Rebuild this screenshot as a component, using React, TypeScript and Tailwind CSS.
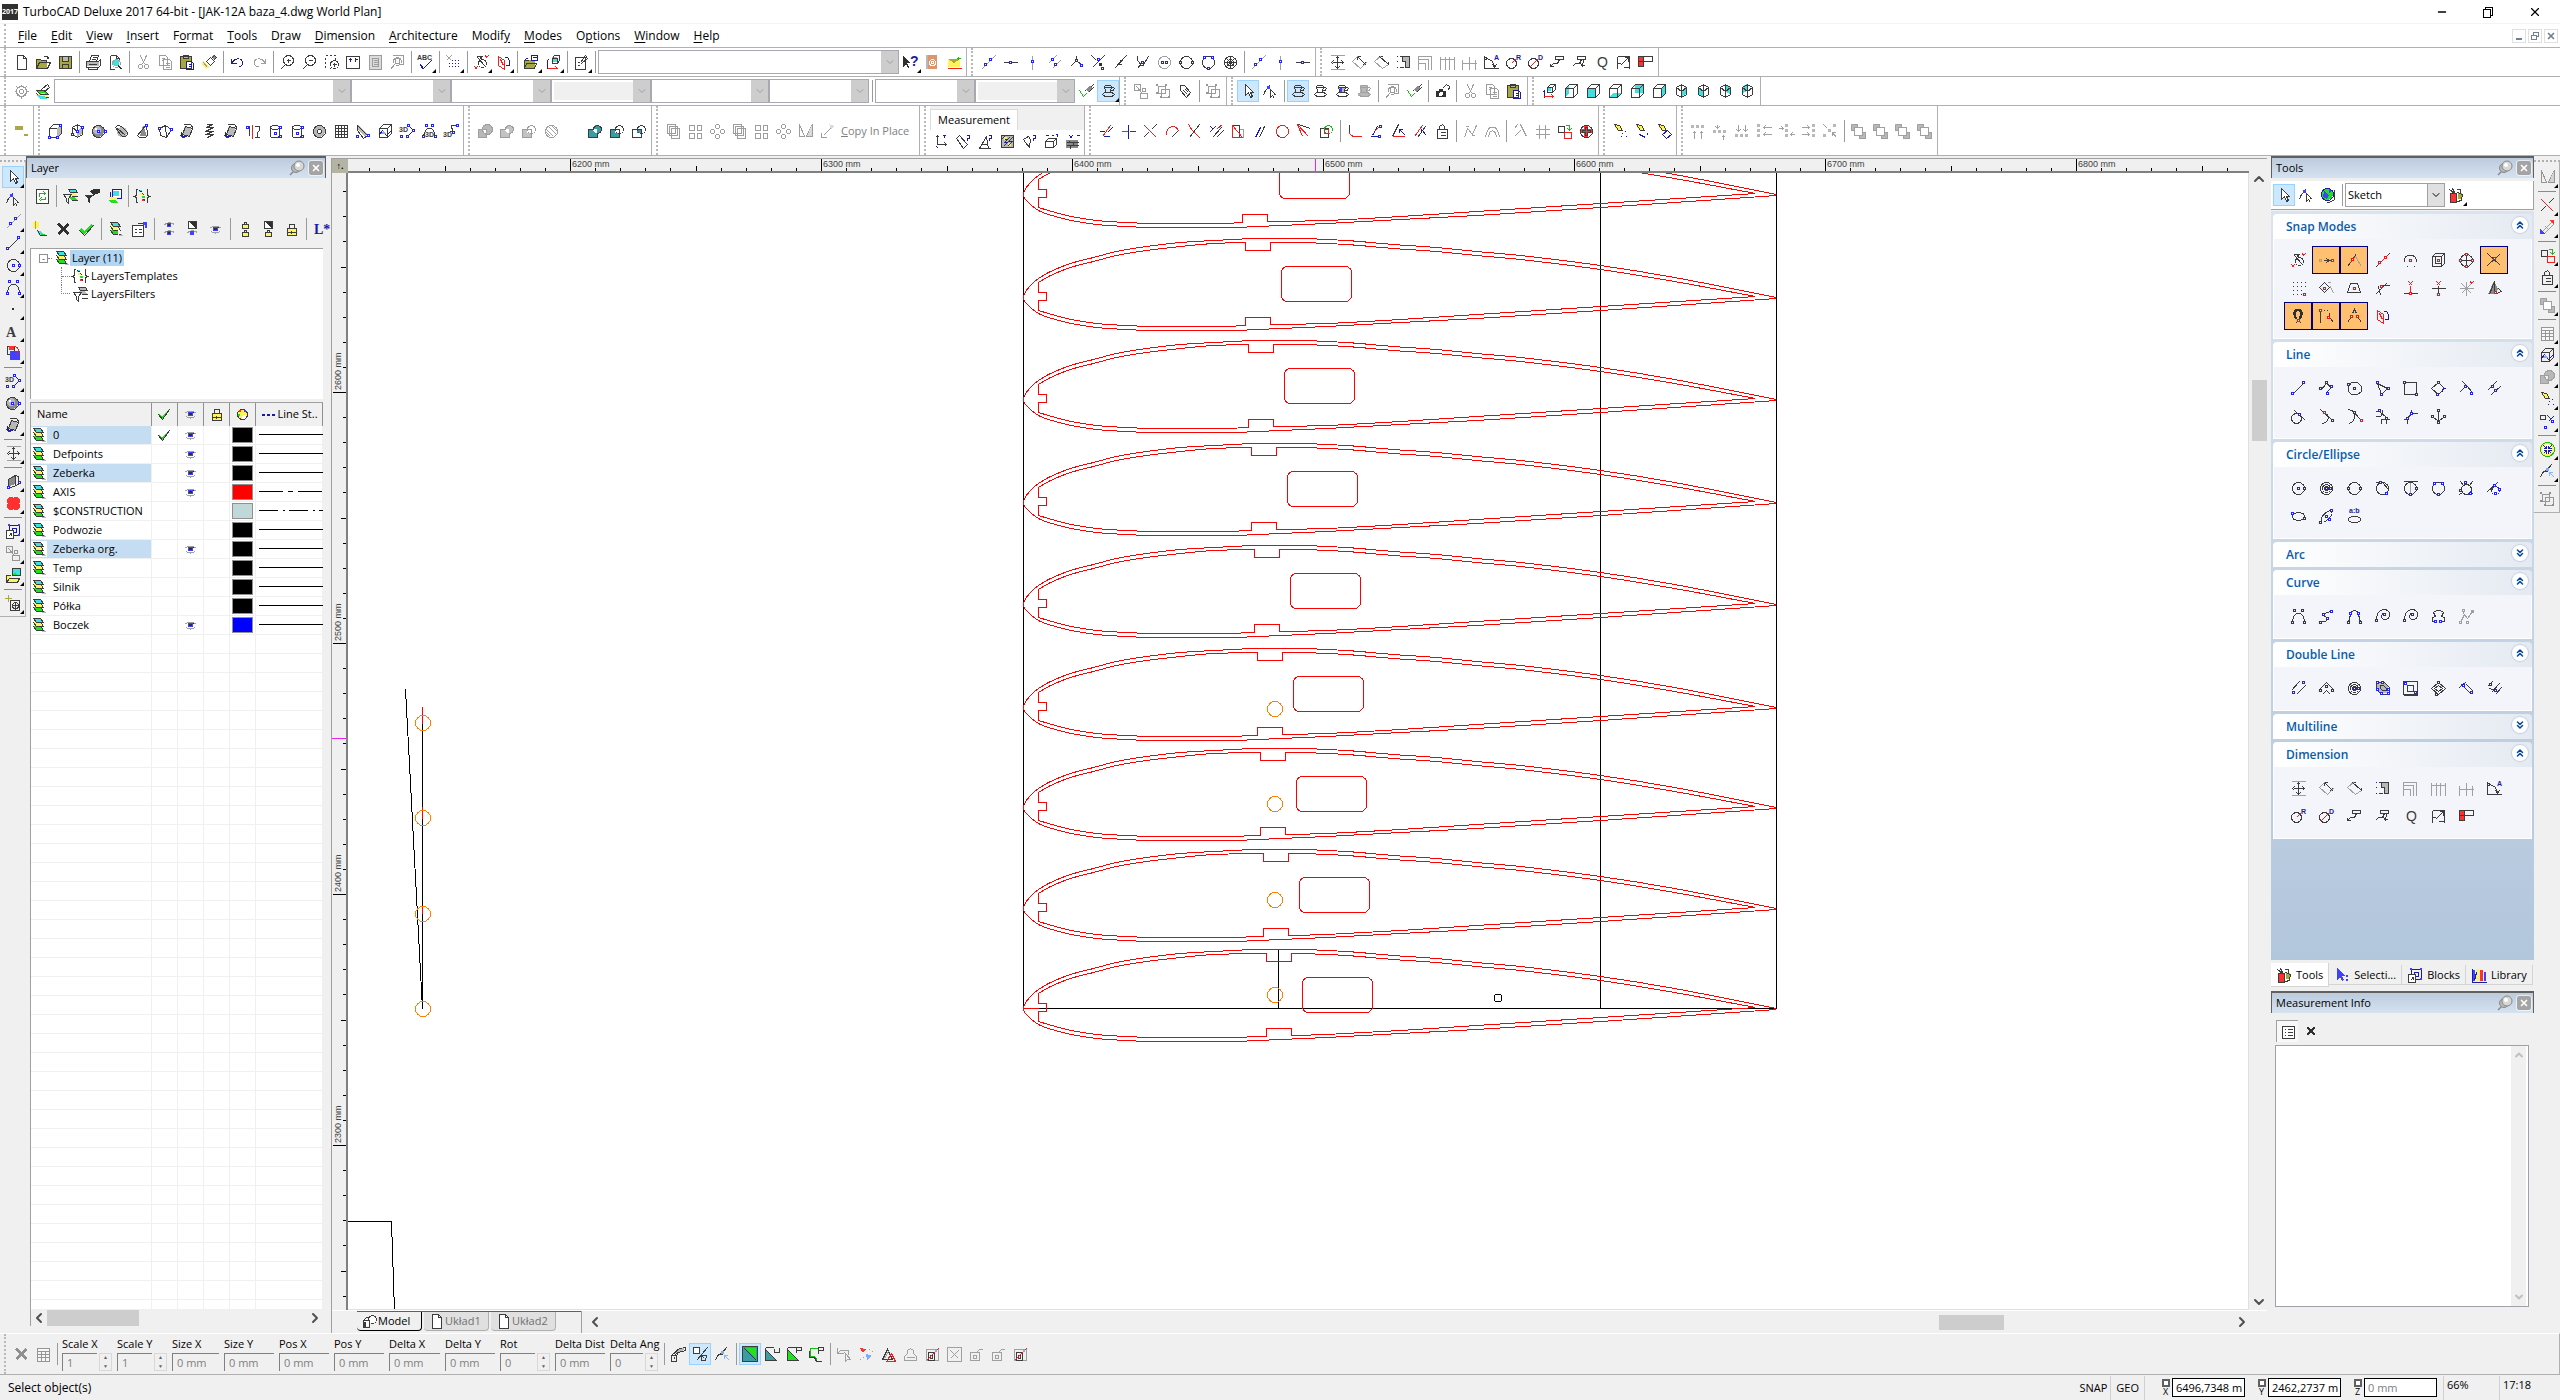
import { useState } from 'react';
import type { ReactNode } from 'react';
import { ChevronDown, ChevronLeft, ChevronRight, ChevronUp, ChevronsDown, ChevronsUp, Minus, X } from 'lucide-react';

type IconDef = Record<string, string>;

// lower case: strokes, upper case: fills, n/o: blue/red nodes, t/u: dark/blue text
const STROKES: Record<string, string> = {
  k: '#3c3c3c', g: '#a0a0a0', r: '#ef2020', b: '#1a1aa8', v: '#10c010', s: '#8ab4ff', w: '#ffffff',
};
const FILLS: Record<string, string> = {
  K: '#303030', G: '#b8b8b8', R: '#ff3030', B: '#4040ff', V: '#20e020', O: '#a8a840', Y: '#fff25a',
  C: '#40e0e0', T: '#3c9ca4', W: '#ffffff', S: '#7fa8ff', D: '#8a8a8a', P: '#e0946c',
};

const CUBE = 'M2 5H10V14H2ZM2 5L6 1H14V10L10 14M10 5L14 1';
const ISO = 'M8 1L13 4V11L8 14L3 11V4ZM8 1V14M3 4L8 8L13 4';
const STACK: IconDef = {
  G: 'M6 12L12 15H16L10 11Z', C: 'M2 1H9L12 5H5Z', Y: 'M2 5H9L12 9H5Z', V: 'M2 9H9L12 13H5Z',
  k: 'M2 1H9L12 5H5ZM2 5L5 9H12L10 6M2 9L5 13H12L10 10',
};
const CUP = 'M4 3C5 1 10 1 11 3C10 5 5 5 4 3L5 8C6 10 9 10 10 8L11 3M11 4C15 3 14 8 11 7M2 11C4 8 12 8 14 11C12 14 4 14 2 11Z';

const ICONS: Record<string, IconDef> = {
  new: { W: 'M4 1H11L13 4V15H4Z', k: 'M4 1H10L13 4V15H4ZM10 1V4H13' },
  open: { O: 'M1 5H5L6 6H12V14H1Z', k: 'M1 14V5H5L6 6H11V8M1 14L4 8H15L12 14ZM8 3C10 1 12 1 13 4M11 4H13V2' },
  save: { O: 'M2 2H14V14H2Z', G: 'M5 2H11V7H5Z', k: 'M2 2H14V14H2ZM5 2V7H11V2M5 14V10H11V14' },
  print: { G: 'M2 7H14V12H2Z', k: 'M4 7L6 1H13L11 7M1 7H13L15 5V11L13 13H1ZM3 10H11M3 13V15H12V13M7 3H11M6 5H10' },
  preview: { k: 'M3 1H9L12 4V6M3 1V15H7M9 1V4H12', C: 'O9,9,3', g: 'O9,9,4', K: 'M11 11L15 14V15H13L10 12Z' },
  cut: { k: 'M5 1L9 10M11 1L7 10O5,12,2O11,12,2' },
  copy: { k: 'M2 1H8L10 3V11H2ZM6 5H12L14 7V15H6ZM4 4H7M4 6H6M8 9H12M8 11H12M8 13H12' },
  paste: { O: 'M1 2H12V14H1Z', G: 'M4 1H9V4H4Z', W: 'M7 7H14V15H7Z', k: 'M1 2H12V14H1ZM4 1H9V4H4Z', b: 'M7 7H12L14 9V15H7ZM9 10H12M9 12H12' },
  brush: { Y: 'M2 7L9 13L5 15L1 10Z', D: 'M10 3L12 1L15 3L13 6Z', k: 'M5 7L9 3L13 7L9 11ZM10 4L13 1L15 3L12 6', g: 'M2 8L6 13' },
  undo: { b: 'M2 4V9H7M2 9C5 3 13 3 13 8C13 11 11 12 9 12' },
  redo: { g: 'M14 4V9H9M14 9C11 3 3 3 3 8C3 11 5 12 7 12' },
  zoomin: { k: 'O9,6,5M6 10L1 15M9 4V8M7 6H11' },
  zoomout: { k: 'O9,6,5M6 10L1 15M7 6H11' },
  zoomwin: { k: 'M2 1H4M6 1H8M10 1H12M12 3V5M2 3V5M2 7V9M2 11V13M9 10H13M11 8V12O11,10,4M8 13L6 15' },
  extent: { k: 'M1 2H14V14H1Z', b: 'M3 5H6M9 5H12M5 3V7M10 3V7' },
  page: { G: 'M2 1H14V15H2Z', k: 'M2 1H14V15H2ZM5 4H11V12H5ZM6 6H10M6 8H10M6 10H10' },
  zoompage: { k: 'M3 1H14V10H9O8,7,4M5 10L1 15M6 4H10V9H6Z' },
  abc: { t: '0,6,ABC', b: 'M3 10L6 14L14 6M3 11L6 15' },
  dots: { g: 'M1 1L6 6M6 1L1 6', b: 'M6 6H7M9 6H10M12 6H13M6 9H7M9 9H10M12 9H13M6 12H7M9 12H10M12 12H13M3 9H4M3 12H4' },
  snapno: { k: 'O9,9,4M3 2H9L7 5M4 3L12 12M6 2L8 5', r: 'M1 12L4 15M4 12L1 15M12 1L13 3L15 1' },
  mirror: { r: 'M3 2V11L9 15V6ZM5 5L8 11', b: 'M9 3H12L14 6V11H10' },
  views: { O: 'M1 6H12V14H1Z', k: 'M1 14V6H5M1 14L3 9H13L11 14Z', b: 'M8 1H14V6H8ZM9 3H13M5 3L2 5' },
  axes: { C: 'M7 3H12V8H7Z', k: 'M7 4H12V9H7ZM7 4L9 1H14V6L12 9', r: 'M2 14H12M10 12L12 14', b: 'M2 14V6M1 8L3 5' },
  props: { k: 'M2 3H12V15H2ZM4 8H6M4 11H6M7 8L12 1L14 4L8 9' },
  help: { K: 'M1 1V13L4 10L6 14L7 13L5 9H8Z', u: '8,12,?' },
  book: { P: 'M2 1H13V15H2Z', G: 'M2 1H4V15H2Z', w: 'O8,8,3O8,8,1' },
  mail: { Y: 'M2 5H14V13H2Z', O: 'M2 5L8 9L14 5Z', r: 'M1 14H15', v: 'M12 2V5M10 4H14' },
  model: { W: 'M2 6H9V13H2ZO11,6,4', k: 'O11,6,4M2 7H8V14H2ZM2 7L5 4H7M3 8V13M4 8V13' },
  ln: { k: 'M3 13L13 3', n: '2,13 13,2' },
  seg: { g: 'M1 15L15 1', n: '5,10 10,5' },
  seg2: { k: 'M1 8H15', n: '8,8' },
  seg3: { g: 'M8 1V15', n: '8,7' },
  par: { g: 'M2 9L10 1M6 14L14 6', n: '6,5 9,10' },
  perp: { k: 'M2 12L8 6M8 1V6L15 12', n: '8,6 13,11' },
  cross: { k: 'M1 1L6 6M14 1L2 13', n: '8,5 12,14', K: 'M9 9H12V12H9Z' },
  dbl: { k: 'M2 14L14 1M5 10H9M8 5V8' },
  fork: { k: 'M3 1V6L8 12M8 12L14 2M3 14L8 8', n: '8,8' },
  circc: { k: 'O8,8,6', n: '8,8 14,8' },
  circ2: { k: 'O8,8,6', n: '2,8 14,8' },
  circd: { g: 'O8,8,6', n: '6,8 10,8' },
  circ3: { k: 'O8,8,6', n: '4,3 12,3 8,14' },
  hatchc: { k: 'O8,8,6O8,8,3M4 4L12 12M12 4L4 12M8 2V14M2 8H14' },
  concent: { k: 'O8,8,6O8,8,4O8,8,2', n: '8,8 12,8' },
  tang: { k: 'O8,8,6M1 2H8L14 9', n: '6,2 12,13' },
  circt: { k: 'O8,8,6M1 1H15', g: 'M8 2V14', n: '8,14 14,8' },
  circx: { k: 'O8,9,5M2 1L5 5M14 1L11 5M1 14L4 12M15 14L12 12', n: '7,2 12,13 2,10' },
  circy: { k: 'O9,10,4M1 11L12 1M3 9H6', n: '8,5 13,9 9,13' },
  ell: { k: 'M2 8C2 3 14 3 14 8C14 13 2 13 2 8Z', n: '2,5 14,10' },
  ellr: { k: 'M3 13C0 10 10 0 13 3C16 6 6 16 3 13Z', n: '13,2 2,14 8,8 11,11' },
  ellab: { k: 'M2 11C2 7 14 7 14 11C14 15 2 15 2 11Z', u: '3,5,a:b' },
  poly: { k: 'M3 9L8 3L13 7L8 12', n: '2,8 8,2 13,6 9,13' },
  ngon: { k: 'M5 2H11L15 6V11L11 14H5L2 11V6Z', n: '2,4 8,8' },
  tri: { k: 'M3 3L13 8L7 14Z', n: '3,2 14,8 7,14' },
  rect: { k: 'M2 2H14V14H2Z', n: '2,2 14,14' },
  rrect: { k: 'M8 2L14 8L8 14L1 8Z', b: 'M12 8H15M12 8V11', n: '8,2 7,14' },
  pln: { k: 'M1 12L8 5L4 1M8 5L14 12', n: '7,6 13,13' },
  parl: { k: 'M1 10L10 1M5 14L15 5', n: '6,6 9,10' },
  tanc: { k: 'O6,10,5M4 2L15 12', n: '9,6' },
  arcl: { k: 'M2 1L14 12M9 6C11 10 9 14 4 15', o: '6,4', n: '14,12' },
  arcr: { k: 'M2 1C10 3 10 12 3 15M6 2L14 11', n: '8,4', o: '15,12' },
  twoarc: { k: 'M1 3H5L12 9V15M1 8H5M5 8C8 8 8 3 8 1M7 15V11H15', n: '5,2 12,10' },
  star: { k: 'M9 1V5H15M1 11H5L5 15M5 10L9 5', n: '9,5 5,10' },
  tree: { k: 'M8 2V13M2 8L8 13L14 8', n: '8,2 2,8 14,8 8,14' },
  bez: { k: 'M2 13C3 2 13 2 14 13', n: '2,14 14,14 4,2 12,2' },
  spl: { k: 'M3 13C10 14 10 9 6 8C2 6 8 4 13 3', n: '2,14 9,10 5,6 13,3' },
  arch: { k: 'M2 14L4 6C5 1 11 1 12 6L14 14', n: '2,14 14,14 4,5 12,5' },
  spiral: { k: 'M2 12C2 -2 15 -1 15 6C15 13 6 12 7 7C8 4 12 4 11 8', n: '2,12 10,6' },
  cloud: { k: 'M5 13H2V9L5 8L3 4L6 2H10L13 4L11 8L14 9V13H11', n: '5,13 10,13' },
  zig: { g: 'M2 14L6 6L9 10L14 3M6 6L4 3M1 13H3V15H1ZM8 13H10V15H8ZM13 2H15V4H13ZM4 1H6V3H4Z' },
  point: { K: 'M7 7H9V9H7Z' },
  letter: { t: '1,14,A' },
  fillsq: { k: 'M2 1H9V9H2Z', R: 'M4 1H9V5H4Z', B: 'M5 6H15V15H5Z', r: 'M8 1C13 1 15 6 10 11' },
  t3d: { t: '0,9,3D', b: 'M9 2L14 7L8 13', n: '9,2 14,7 2,13 8,13' },
  t3dc: { t: '4,14,3D', k: 'M2 13C4 2 12 2 14 13', n: '2,13 14,13 5,2 11,2' },
  t3dp: { t: '0,14,3D', k: 'M7 8C10 9 10 5 8 5C6 2 10 1 13 2', n: '14,2 10,9' },
  ball: { D: 'O7,8,6', G: 'O6,7,4', W: 'O5,6,1', k: 'O7,8,6', n: '7,8 14,8' },
  sheet: { G: 'M6 3L13 5L10 13L3 11Z', k: 'M6 3L13 5L10 13L3 11ZM4 1L11 1L14 5M1 12L3 14L8 13', b: 'M2 9C1 13 5 15 8 12' },
  box: { k: CUBE, G: 'M10 5L14 1V10L10 14Z', n: '2,14 10,14 13,2' },
  boxr: { k: ISO, G: 'M8 8L13 4V11L8 14Z', n: '3,11 13,4 8,8' },
  torus: { G: 'O8,8,6', W: 'O8,8,2', k: 'O8,8,6O8,8,2' },
  ring: { G: 'O9,9,5', k: 'M2 4C4 1 8 2 10 5L14 9C14 14 9 14 7 11ZM4 5L12 12' },
  cone: { D: 'M8 2L12 13L5 13Z', k: 'M11 1L2 12C4 15 10 15 12 12Z', n: '11,2' },
  wedge: { k: 'M2 5L8 2L14 6L9 14L3 12ZM8 2L9 14', n: '2,5 14,6' },
  screw: { k: 'M5 1H11L5 4H12L4 8H12L4 11H12L6 14M8 1V3' },
  revolve: { k: 'M9 3H14V7L12 9V14M9 14H14M4 2V12', r: 'M7 1V15', n: '2,4' },
  cyl: { k: 'M3 4V13C4 15 10 15 12 13V4M3 4C4 1 11 1 12 4C11 7 4 7 3 4', n: '13,4 8,10 13,13' },
  grid: { k: 'M2 2H14V14H2ZM5 2V14M8 2V14M11 2V14M2 5H14M2 8H14M2 11H14' },
  slab: { G: 'M3 2L12 11L10 14L2 5Z', k: 'M2 2L12 12L8 15L2 7Z', n: '2,13 13,12' },
  section: { k: CUBE, b: 'M1 12L5 7L9 12L14 7', S: 'M3 11L6 8L9 11Z' },
  union: { T: 'M1 6H10V14H1ZO10,6,4', k: 'M1 6H6C6 1 14 1 14 6C14 8 12 10 10 10V14H1Z' },
  diff: { T: 'M1 6H6V10H10V14H1Z', k: 'O10,6,4M1 6H10V14H1Z' },
  inter: { T: 'M6 6H10V10H6Z', k: 'O10,6,4M1 6H10V14H1Z' },
  sphereg: { G: 'O10,6,5M1 6H10V14H1Z', g: 'O10,6,5M1 6H9V14H1Z' },
  hatchg: { g: 'O8,8,6M3 6L10 13M5 3L13 11M8 2L14 8M3 9L7 13' },
  squares: { k: 'M2 1H10V10H2ZM4 3H12V12H4ZM6 5H14V15H6Z' },
  four: { k: 'M2 2H7V7H2ZM10 2H14V7H10ZM2 10H7V15H2ZM10 10H14V15H10Z' },
  ringo: { k: 'O8,3,2O3,8,2O13,8,2O8,13,2' },
  flip: { k: 'M2 1V13H7ZM15 1V13H9Z', G: 'M15 2V13H10Z' },
  scale: { k: 'M2 9V14H7M4 12L12 4', G: 'M10 1L15 3L12 6Z' },
  dim: { g: 'M1 1H15M1 15H15', k: 'M8 2V14M3 8H13M6 4L8 2L10 4M6 12L8 14L10 12M4 6L2 8L4 10M12 6L14 8L12 10' },
  dimr: { k: 'M6 2L14 10M6 2V5M6 2H9M14 10V7M14 10H11', g: 'M1 7L6 2M1 7L9 14L15 8' },
  dimr2: { k: 'M6 2L15 10M6 2H9M15 10V7', g: 'M1 7L8 1M1 7L9 14L15 10' },
  dimh: { G: 'M8 2H14V13H10V8H7Z', k: 'M7 2H14V13H10V7H7ZM4 2H6M4 13H8', b: 'M1 2H2M1 7H2M1 13H2' },
  dim1: { g: 'M1 1V15M1 2H14M1 5H11M1 9H8M14 2V15M11 5V15M8 9V15' },
  dim2: { g: 'M1 2V15M1 5H15M6 2V15M10 2V15M15 2V15' },
  dim3: { g: 'M1 5V15M1 9H15M8 2V13M14 5V15M8 12V15' },
  dima: { k: 'M1 1V14H15M2 4C7 4 11 8 11 13M1 4L4 2M1 4L4 6M11 13L9 10M11 13L13 10', u: '11,6,A' },
  dimR: { k: 'O6,9,5', r: 'M6 9L10 5', u: '11,6,R' },
  dimD: { k: 'O6,9,5', r: 'M2 13L10 5', u: '11,6,D' },
  lead: { k: 'M6 2H14V5H6ZM10 5L8 9H4L1 12M1 9V12H4' },
  lead2: { k: 'M6 2H14V5H6ZM10 5L8 9H4L1 12M12 5L11 12M9 9L11 12L14 10' },
  Q: { t: '4,13,Q' },
  mbox: { k: 'M2 2H14V14M2 2V14M5 11L13 3M2 9H5M8 13H14M9 3H13V7' },
  stamp: { R: 'M2 3H6V12H2Z', k: 'M1 2H15V7H6V12H1ZM6 2V7H1' },
  gear: { k: 'O8,8,5O8,8,2M8 1V3M8 13V15M1 8H3M13 8H15M3 3L5 5M11 11L13 13M3 13L5 11M11 5L13 3' },
  layers: { V: 'M2 8H10L14 12H5Z', Y: 'M2 11L5 14H13L10 10Z', k: 'M1 7H9L13 11H5ZM1 10L5 14H13M6 6L12 1L14 4L9 8', C: 'M1 12L5 16H12L9 13Z' },
  stackL: STACK,
  pick: { k: 'M9 8L15 1M7 7L12 3M10 9L15 4', D: 'M8 6L12 2L14 5L10 9Z', v: 'M1 7L5 13L8 10' },
  cup: { k: CUP },
  cupb: { G: 'M5 4H11L10 9H6Z', B: 'M6 5H8V9H6Z', k: CUP },
  cupg: { G: 'M4 2H12V9H4ZM2 10H14V13H2Z', g: CUP },
  grp: { k: 'M1 1H7V7H1ZM9 5H12V8H9ZM7 10H14V15H7ZM3 3L9 10' },
  group: { k: 'M3 3H10V10H3ZM6 6H14V14H6Z', K: 'M1 1H3V3H1ZM10 1H12V3H10ZM1 9H3V11H1ZM13 13H15V15H13ZM5 13H7V15H5Z' },
  tag: { k: 'M3 2H7L13 9L9 14L3 7ZM6 7L10 11M8 6L11 9' },
  arrow: { W: 'M5 1V12L8 9L10 14L12 13L10 9H13Z', k: 'M5 1V12L8 9L10 14L12 13L10 9H13Z' },
  editarrow: { k: 'M1 12C2 8 4 5 7 4M7 1V4M8 6V14L10 12L12 15M8 6L13 11H11', B: 'M5 3H8V6H5Z' },
  globe: { V: 'O7,7,6', B: 'M4 4L9 8L7 12L3 10ZM9 2L12 4L9 6Z', b: 'O7,7,6', k: 'M14 2V12L9 15H6' },
  camera: { K: 'M2 8H12V14H2ZM5 6H9V8H5Z', W: 'O7,11,2', k: 'M8 5L12 1L15 3L14 7' },
  vcube: { C: 'M7 4H10V8H7Z', k: 'M6 4H11V9H6ZM6 4L9 1H14V6L11 9M11 4L14 1', b: 'M3 14V7M1 9L3 7', r: 'M2 13H12M10 11L12 13L10 15' },
  vleft: { C: 'M2 5L6 1V10L2 14Z', k: CUBE },
  vfront: { C: 'M2 5H10V14H2Z', k: CUBE },
  vbot: { C: 'M2 14L6 10H14L10 14Z', k: CUBE },
  vback: { C: 'M6 1H14V10H6Z', k: CUBE },
  vright: { C: 'M10 5L14 1V10L10 14Z', k: CUBE },
  iso1: { C: 'M8 8L13 4V11L8 14Z', k: ISO },
  iso2: { C: 'M3 4L8 8V14L3 11Z', k: ISO },
  iso3: { C: 'M8 1L13 4V11L8 8Z', k: ISO },
  iso4: { C: 'M8 1L3 4V11L8 8Z', k: ISO },
  mcoord: { k: 'M4 2V11H13M2 4L4 2L6 4M11 9L13 11L11 13', b: 'M3 13L5 15M9 2L12 2L10 5' },
  mlen: { k: 'M1 5L4 2L12 11L8 15Z', b: 'M11 2H14V5H12V7' },
  mang: { k: 'M2 15L9 3L11 15M4 11H10M1 15H13', b: 'M11 2H14V5H12V7' },
  marea: { G: 'M3 3H14V14H3Z', Y: 'M5 4H8V7H5ZM9 10H12V13H9Z', k: 'M2 2H14V14H2ZM4 10L10 4M4 13L13 4M8 13L13 8M2 6L6 2', b: 'M5 6H8M9 8H12M5 9H8' },
  mvol: { k: 'M2 6L7 3L9 6L8 14L4 9Z', b: 'M11 2H14V5H12V7' },
  mbox3: { k: 'M2 8H10V14H2ZM2 8L5 5H13V11L10 14M10 8L13 5', b: 'M2 2H5M8 2H10M12 1H14V3' },
  mwall: { D: 'M1 7H13V15H1Z', k: 'M1 9H13M1 12H13M4 7V9M8 9V12M5 12V15', b: 'M4 2L7 5M7 2L4 5M11 2H14' },
  trim: { r: 'M4 13L12 2', b: 'M1 8H6M5 13H11M9 9L14 4' },
  meet: { b: 'M8 1V15', r: 'M1 8H7', k: 'M9 8H15' },
  split: { r: 'M2 2L14 14', k: 'M14 1L9 6M6 9L1 14' },
  arc3: { r: 'M2 11C2 1 13 1 14 8', k: 'M7 14L13 8' },
  xcut: { r: 'M2 1C5 7 9 10 14 15', k: 'M13 1L3 14' },
  hatch4: { b: 'M2 3L5 6', k: 'M4 14L13 4M8 14L15 7M1 9L7 3', r: 'M9 5L14 1' },
  clip: { k: 'M2 2H9V14H2Z', r: 'M2 2L12 14H2Z', g: 'M9 6H13V14' },
  para: { b: 'M3 14L8 4', k: 'M7 14L12 3' },
  rcirc: { r: 'O8,8,6', k: 'M3 12L5 14' },
  rarr: { r: 'M1 1L12 13M1 1L6 13', k: 'M2 1L14 5' },
  ovl: { k: 'M2 5H10V14H2Z', v: 'O10,6,4', r: 'M6 6H10V10H6Z' },
  fil: { k: 'M3 1V8', r: 'M3 8C3 12 6 13 9 13H15' },
  cham: { b: 'M2 13H12M9 3L4 12', r: 'M12 2L6 8', n: '11,13 12,3' },
  cham2: { k: 'M8 1L2 13', r: 'M2 13H14', b: 'M9 6L15 12M9 6V9M9 6H12' },
  cham3: { r: 'M2 13L10 2', k: 'M5 14L13 3', b: 'M9 6L14 12M9 6V9' },
  bag: { k: 'M3 6H13V15H3ZM5 6V3L8 1L10 3V6M6 9H11M6 12H11' },
  gcurve: { g: 'M2 14L5 5L10 11L14 2M3 3H6M9 12H12' },
  garc: { g: 'M1 14C3 0 13 0 15 14M4 14C5 5 11 5 12 14' },
  gx: { g: 'M2 13L8 7M8 1L14 13M5 1L2 5' },
  ghash: { g: 'M5 1V15M11 1V15M1 6H15M1 11H15' },
  swap: { v: 'M9 2H13V7M11 5L13 7L15 5', k: 'M2 3H8V9H2Z', r: 'M8 9H15V15H8Z' },
  plusr: { R: 'M6 2H10V6H14V10H10V14H6V10H2V6H6Z', k: 'O8,8,6M7 4H9V7H12V9H9V12H7V9H4V7H7Z' },
  greenx: { Y: 'O8,8,7', v: 'O8,8,7', W: 'O8,8,5', b: 'M4 4L7 7V4M7 7H4M12 4L9 7V4M9 7H12M4 12L7 9V12M7 9H4M12 12L9 9V12M9 9H12' },
  marker: { Y: 'M2 2L7 2L10 6L5 7Z', k: 'M2 1L7 2L10 7L6 7Z', b: 'M10 9V10M13 7V8M8 13H9M13 13H14' },
  marker2: { Y: 'M2 2L7 2L10 6L5 7Z', k: 'M2 1L7 2L10 7L6 7Z', b: 'M5 11L11 14M13 9V11' },
  marker3: { Y: 'M2 2L7 2L10 6L5 7Z', k: 'M2 1L7 2L10 7L6 7Z', b: 'M6 11L11 7L15 11L10 15Z' },
  al1: { G: 'M1 2H4V5H1ZM6 2H9V5H6ZM11 2H14V5H11Z', g: 'M4 15V8M2 10L4 8L6 10M11 15V8M9 10L11 8L13 10' },
  al2: { G: 'M1 7H4V10H1ZM6 7H9V10H6ZM11 7H14V10H11Z', g: 'M5 1V5M3 3L5 5L7 3M11 16V12M9 14L11 12L13 14' },
  al3: { G: 'M1 11H4V14H1ZM6 11H9V14H6ZM11 11H14V14H11Z', g: 'M4 1V8M2 6L4 8L6 6M11 1V8M9 6L11 8L13 6' },
  al4: { G: 'M1 1H4V4H1ZM1 6H4V9H1ZM1 11H4V14H1Z', g: 'M15 4H7M9 2L7 4L9 6M15 11H7M9 9L7 11L9 13' },
  al5: { G: 'M7 1H10V4H7ZM7 6H10V9H7ZM7 11H10V14H7Z', g: 'M0 5H5M3 3L5 5L3 7M16 11H12M14 9L12 11L14 13' },
  al6: { G: 'M12 1H15V4H12ZM12 6H15V9H12ZM12 11H15V14H12Z', g: 'M1 4H9M7 2L9 4L7 6M1 11H9M7 9L9 11L7 13' },
  al7: { G: 'M11 1H14V4H11ZM6 6H9V9H6ZM1 11H4V14H1Z', g: 'M1 1L5 5M14 14L10 9M10 12V9H13' },
  ord: { G: 'M1 1H7V7H1ZM9 9H15V15H9Z', W: 'M4 4H12V12H4Z', g: 'M1 1H7V4M1 1V7H4M4 4H12V12H4ZM12 9H15V15H9V12' },
  wall: { D: 'M3 6L10 2V11L3 14Z', k: 'M3 6L10 2L13 3V11L3 15ZM10 2V11', n: '3,14 14,9' },
  blob: { R: 'O6,6,4O11,6,4O6,11,4O11,11,4' },
  block: { b: 'M4 2H14V12H4ZM7 5H11V9H7Z', B: 'M3 1H5V3H3ZM13 1H15V3H13ZM13 11H15V13H13Z', W: 'M1 7H8V15H1Z', k: 'M1 7H8V15H1ZM3 13L6 10M4 10H6V12' },
  pic: { C: 'M7 1H15V8H7Z', Y: 'M1 9H5L6 11H13V15H1Z', k: 'M7 1H15V8H7ZM1 15V8H5M1 15L4 11H14L12 15Z', V: 'M7 8L10 5L12 8Z' },
  sparkle: { O: 'M3 0H4V7H3ZM0 3H7V4H0Z', k: 'M5 5H14V15H5ZO10,10,3M10 6V14M6 10H13' },
  refresh: { W: 'M2 1H14V15H2Z', k: 'M2 1H14V15H2Z', v: 'M5 8V5H10M9 3L11 5L9 7M11 8V11H6M7 9L5 11L7 13' },
  filt: { C: 'M6 1H13L15 4H8Z', Y: 'M7 5H13L15 8H9Z', V: 'M8 9H13L15 12H9Z', k: 'M6 1H13L15 4H8ZM9 8H15M9 12H15M1 6H9L6 10V15L4 13V10Z' },
  filth: { K: 'M6 3L10 1H16V5L9 7ZM1 7H9L6 11V16L4 14V11Z', k: 'M1 7H9' },
  screen: { W: 'M6 1H15V9H6Z', C: 'M7 3H13V8H7Z', b: 'M6 1H15V10H6ZM4 3V10', Y: 'M2 9H9L12 12H5Z', V: 'M3 12H10L12 15H5Z' },
  tmpl: { C: 'M5 2H8V4H5Z', Y: 'M6 5H9V7H6Z', V: 'M8 8H11V10H8Z', R: 'M8 11H11V13H8Z', k: 'M3 1H2V7L0 8L2 9V14H3M12 1H13V7L15 8L13 9V14H12M8 5L10 7M9 11L11 12', b: 'M5 2L8 4' },
  newl: { Y: 'M1 1H7V7H1Z', O: 'M3 0H4V8H3Z', C: 'M5 10H9L13 15H8Z', V: 'M9 13H13L14 15H10Z', k: 'M5 9L8 14H14' },
  del: { K: 'M2 3L4 2L8 6L12 2L14 4L10 8L14 12L12 14L8 10L4 14L2 12L6 8Z' },
  ok: { V: 'M1 9L3 7L6 10L13 3L15 4L6 14Z', k: 'M1 9L6 14L15 4' },
  sel: { ...STACK, W: 'M10 6V14L12 12L14 15' },
  plist: { W: 'M1 4H12V15H1Z', k: 'M1 4H12V15H1ZM3 8H5M7 8H10M3 11H5M7 11H10M6 2H12V5', B: 'M12 1H16V7H14V4H12Z' },
  eye: { g: 'M2 7C5 4 11 4 14 7M4 10C6 12 10 12 12 10', b: 'M5 6H11', B: 'M6 6H11V10H6Z', K: 'M7 7H10V9H7Z' },
  eyes: { g: 'M3 3C6 1 10 1 13 3M3 11C6 9 10 9 13 11', B: 'M6 2H10V6H6ZM6 10H10V14H6Z', K: 'M7 3H9V5H7ZM7 11H9V13H7Z' },
  eyeh: { W: 'M4 0H12V7H4Z', K: 'M4 0H12V7Z', k: 'M4 0H12V7H4Z', g: 'M3 11C6 9 10 9 13 11', B: 'M6 10H10V14H6Z' },
  lock: { Y: 'M4 7H13V14H4Z', k: 'M4 7H13V14H4ZM6 7V3H11V7M8 9V12M4 11H13' },
  locks: { Y: 'M5 3H11V7H5ZM5 11H11V15H5Z', k: 'M5 3H11V7H5ZM5 11H11V15H5ZM7 3V1H9V3M7 11V9H9V11' },
  lockh: { W: 'M4 0H12V7H4Z', K: 'M4 0H12V7Z', Y: 'M5 11H11V15H5Z', k: 'M4 0H12V7H4ZM5 11H11V15H5ZM7 11V9H9V11' },
  lstar: { u: '1,13,L*' },
  tick: { V: 'M2 8L4 8L6 11L13 3L6 14Z', k: 'M2 8L6 13L13 3' },
  palette: { Y: 'O8,8,5', k: 'O8,8,5', R: 'M5 4H7V6H5Z', B: 'M10 4H12V6H10Z', V: 'M4 8H6V10H4Z', W: 'O10,11,2' },
  dash: { b: 'M1 8H4M6 8H9M11 8H14M1 9H4M6 9H9M11 9H14' },
  gfilt: { G: 'M6 1H13L15 4H8ZM7 5H13L15 8H9Z', k: 'M6 1H13L15 4H8ZM9 8H15M9 12H15M1 6H9L6 10V15L4 13V10Z' },
  knife: { R: 'M2 6H8V15H2Z', O: 'M10 6H14V12H10Z', k: 'M1 2L6 6M4 1L7 7M2 6H8V15H2ZM9 5L14 7L13 13L9 14M8 2H12V5' },
  cursor: { B: 'M3 1V13L6 10L8 14L10 13L8 9H12ZM12 8H14V10H12ZM12 12H14V14H12Z' },
  books: { B: 'M2 3H4V14H2ZM13 5H15V14H13Z', Y: 'M5 2H8V14H5Z', R: 'M9 3H12V14H9Z', b: 'M1 1V15H15M3 13L5 5' },
  list: { W: 'M2 2H14V14H2Z', k: 'M2 2H14V14H2ZM4 5H5M7 5H12M4 8H5M7 8H12M4 11H5M7 11H12' },
  sheet2: { W: 'M2 2H14V15H2Z', k: 'M2 2H14V15H2ZM2 5H14M2 8H14M2 11H14M6 5V15M10 5V15' },
  // snap modes
  s2: { k: 'M5 8H12M8 6L11 8L8 10', g: 'M1 7H3V9H1Z', o: '14,8' },
  s3: { k: 'M1 14L9 3M9 1V4', r: 'M4 10L8 5', g: 'M9 4L15 14', o: '6,7' },
  s4: { r: 'M3 13L13 3', k: 'M1 15L3 13M13 3L15 1', o: '5,10 11,5' },
  s5: { k: 'M2 10C0 0 15 0 14 10M4 14H5M11 14H12', o: '8,8' },
  s6: { k: 'M2 4H11V14H2ZM2 4L5 1H14V11L11 14M11 4L14 1M5 4V11H11', o: '8,8' },
  s7: { k: 'O8,8,6M8 2V14M2 8H14', o: '8,2 8,14 2,8 14,8' },
  s8: { k: 'M1 1L14 13M14 1L1 13', o: '8,6' },
  s9: { k: 'M2 2H3M6 2H7M10 2H11M14 2H15M2 6H3M6 6H7M10 6H11M14 6H15M2 10H3M6 10H7M10 10H11M2 14H3M6 14H7M10 14H11', o: '14,14' },
  s10: { k: 'M1 7L6 2L11 7L6 12Z', g: 'M9 2H12M12 6L15 13', o: '6,8' },
  s11: { k: 'M4 3H11L14 12H1Z', o: '8,8' },
  s12: { k: 'M1 14L12 3M8 5H15M4 6L6 15', o: '7,6' },
  s13: { k: 'M1 13H15', r: 'M8 5V13M6 1L10 5M10 1L6 5', o: '8,13' },
  s14: { k: 'M1 8H15M8 5V12', r: 'M6 1L10 5M10 1L6 5', o: '8,14' },
  s15: { g: 'M1 8H15M8 1V15M3 3L13 13M13 3L3 13', r: 'M12 1L13 3L15 1' },
  s16: { D: 'M8 1L12 9L9 14H2Z', k: 'M3 14L8 1V12M10 13L15 11L12 8', o: '9,12' },
  s17: { K: 'M3 6C3 -1 13 -1 13 6L11 11H9L10 6C10 2 6 2 6 6L7 11H5Z', k: 'M5 15L8 12L11 15', o: '8,12' },
  s18: { k: 'M2 3V14M5 2H6M8 2H9M11 4V7M12 10L15 14', o: '2,2 10,9' },
  s19: { k: 'M1 14L5 8M11 8L15 14M6 5L8 1L10 5', o: '5,8 11,8' },
  // double lines
  dl1: { k: 'M1 10L9 1M6 14L15 5', n: '3,12 13,2' },
  dl2: { k: 'M1 9L8 2L15 9M4 14L8 10L12 14', n: '2,10 8,6 14,10' },
  dl4: { G: 'M2 2H10L14 7V13H7L2 9Z', k: 'M2 2H10L15 7V14H7L2 9ZM6 5H9L12 8V10H8L6 8Z', n: '3,2 8,2 3,9 14,9 7,13 14,13' },
  dl5: { k: 'M1 1H15V14H1ZM1 15H15M5 5H11V11H5Z', n: '3,3 13,12' },
  dl6: { k: 'M8 2L15 8L8 14L1 8ZM8 5L12 8L8 11L4 8Z', n: '8,2 6,14' },
  dl7: { k: 'M1 7L8 1M3 4L13 14M8 4L15 11', n: '5,5 13,12' },
  dl8: { k: 'M1 6L6 1M5 12L13 3M9 14L15 7M3 8L12 11', n: '4,4 9,10' },
  pen: { k: 'M1 9H6V15H1ZM3 11H4V12M1 9L7 3L15 1V4L8 6L6 9M3 8L9 2M5 8L12 2', G: 'M5 7L9 3L14 2V4L8 6Z' },
  sw: { W: 'M1 1H7V7H1Z', k: 'M1 1H7V7H1ZM15 1L4 14M9 9H14L13 14H9ZM10 10L12 12' },
  node: { k: 'M1 14C2 8 5 8 8 6L12 1M5 8H8', s: 'M10 9L15 14M10 9V12M10 9H13', S: 'M7 5H10V8H7Z' },
  boxsel: { T: 'M1 1H15V15H1Z', V: 'M3 2H14V13Z', k: 'M0 0H15V15H0ZM2 2L14 14' },
  wp: { T: 'M2 4L12 14H2Z', k: 'M1 1H9M1 1V14H12L2 4M10 2V6H15V1' },
  cp: { V: 'M2 4L12 14H2Z', k: 'M1 1H9M1 1V14H12L2 4M10 6V1H15V4H10' },
  fp: { v: 'M9 2H2V10H6L9 14', k: 'M1 4V11H6L8 15H13M10 7V1H15V4H10' },
  back: { g: 'M1 1V7H7M1 7L4 4H12V8M9 7V15L11 13H14ZM8 6L14 12' },
  r1: { R: 'M2 2L8 3L5 7Z', S: 'M8 8L14 10L9 14Z', g: 'M11 2V3M14 4V5M2 12V13M5 10V11' },
  rdiag: { R: 'M10 1H15V6Z', B: 'M1 10L6 15H1Z', g: 'M3 12L12 3M5 14L14 5M6 7L9 10' },
  r2: { k: 'M2 13L7 3L12 13Z', r: 'M6 15L11 7L15 15Z', g: 'M4 12L8 5' },
  padlk: { g: 'M2 14H14V10L11 7V4L8 2L5 4V7L2 10ZM4 11H12' },
  nob: { g: 'M2 3H14V14H2Z', k: 'M4 6H10V14H4ZM6 9H8V12H6Z', r: 'M2 14L14 2', S: 'M11 4H13V6H11Z' },
  nob2: { g: 'M1 1H15V15H1ZM4 4L12 12M12 4L4 12' },
  nob3: { g: 'M2 6H11V14H2ZM5 9H8V12H5ZM9 6C10 3 12 2 15 3' },
  chain: { k: 'M1 2H6V6H1ZM8 2L12 6', b: 'M9 8L14 3', n: '6,14 13,8' },
};

const circlePath = (d: string) =>
  d.replace(/O([\d.]+),([\d.]+),([\d.]+)/g, (_, x, y, r) => `M${x - r} ${y}a${r} ${r} 0 1 0 ${2 * r} 0a${r} ${r} 0 1 0 ${-2 * r} 0`);

function Icon({ name, className = 'size-4' }: { name: string; className?: string }) {
  const def = ICONS[name];
  if (!def) return null;
  return (
    <svg viewBox="0 0 16 16" className={`${className} shrink-0 overflow-visible`} shapeRendering="crispEdges" aria-hidden="true">
      {Object.entries(def).map(([key, value]) => {
        if (key === 'n' || key === 'o') {
          return value.split(' ').map((p) => {
            const [x, y] = p.split(',').map(Number);
            return <rect key={p} x={x - 0.5} y={y - 0.5} width={2} height={2} fill="#fff" stroke={key === 'n' ? '#2020ff' : '#ff1010'} />;
          });
        }
        if (key === 't' || key === 'u') {
          const [x, y, s] = value.split(',');
          const big = s === 'L*' || (s.length === 1 && Number(y) > 10);
          const serif = s === 'L*' || (big && s === 'A');
          return (
            <text key={key} x={x} y={y} fontSize={big ? 14 : 7} fontWeight={s === 'Q' ? 400 : 700} fontFamily={serif ? 'Liberation Serif' : 'Liberation Sans'} fill={key === 't' ? '#3c3c3c' : '#1a1aa8'}>
              {s}
            </text>
          );
        }
        if (STROKES[key]) return <path key={key} d={circlePath(value)} transform="translate(.5 .5)" fill="none" stroke={STROKES[key]} />;
        return <path key={key} d={circlePath(value)} fill={FILLS[key]} />;
      })}
    </svg>
  );
}

// "name" plus optional flags: "+" corner mark, "*" pressed, "~" disabled; "|" is a separator
function Tools({ items, vertical = false, className = '' }: { items: string; vertical?: boolean; className?: string }) {
  return (
    <div className={`flex items-center ${vertical ? 'flex-col' : ''} ${className}`}>
      {items.split(' ').map((raw, i) => {
        if (raw === '|') {
          return vertical
            ? <div key={i} className="mt-[3px] mb-[2px] h-px w-[18px] bg-[#8a8a8a]" />
            : <div key={i} className="mx-[2px] h-[22px] w-[2px] border-r border-[#9a9a9a]" />;
        }
        if (raw === '_') return <div key={i} className="w-[22px]" />;
        const name = raw.replace(/[+*~]/g, '');
        return (
          <button
            key={i}
            type="button"
            aria-label={name}
            className={`relative flex size-[22px] shrink-0 items-center justify-center ${raw.includes('*') ? 'bg-[#cce8ff] outline -outline-offset-1 outline-[#99d1ff]' : ''}`}
          >
            <Icon name={name} className={raw.includes('~') ? 'size-4 opacity-50 grayscale' : 'size-4'} />
            {raw.includes('+') && <span className="absolute right-0 bottom-0 border-4 border-t-0 border-r-0 border-transparent border-b-black" />}
          </button>
        );
      })}
    </div>
  );
}

function Section({ children, className = 'pr-[2px]' }: { children: ReactNode; className?: string }) {
  return (
    <div className={`flex items-center border-r border-[#b0b0b0] ${className}`}>
      <div className="mr-1 ml-1 self-stretch border-l-2 border-dotted border-[#b8b8b8]" />
      {children}
    </div>
  );
}

function Combo({ label, className, dim = false }: { label: string; className: string; dim?: boolean }) {
  return (
    <div className={`relative h-6 border border-[#a8a8b0] bg-white ${className}`}>
      <select aria-label={label} className={`block h-full w-full appearance-none border-2 border-white ${dim ? 'bg-[#f0f0f0]' : 'bg-white'}`} disabled />
      <div className="pointer-events-none absolute inset-y-0 right-0 flex w-[17px] items-center justify-center bg-[#cdcdcd]">
        <ChevronDown className="size-3 text-[#a0a0a0]" />
      </div>
    </div>
  );
}

const MENU = ['&File', '&Edit', '&View', '&Insert', 'F&ormat', '&Tools', 'D&raw', '&Dimension', '&Architecture', 'Modif&y', '&Modes', 'O&ptions', '&Window', '&Help'];

function Header() {
  return (
    <header className="bg-white">
      <div className="flex h-[23px] items-center pl-[2px] text-[12px]">
        <div className="mr-[5px] flex h-4 w-[16px] flex-col items-center justify-center bg-[#303030] text-[7px] leading-none font-bold text-white">2017</div>
        <h1 className="flex-1">TurboCAD Deluxe 2017 64-bit - [JAK-12A baza_4.dwg World Plan]</h1>
        <div className="flex items-center gap-[34px] pr-[18px]">
          <button type="button" aria-label="Minimize"><Minus className="size-3" strokeWidth={3} /></button>
          <button type="button" aria-label="Restore">
            <svg viewBox="0 0 12 12" className="size-3" fill="none" stroke="#000" shapeRendering="crispEdges"><path d="M1.500 3.500H8.500V11.500H1.500ZM3.500 3.500V1.500H10.500V9.500H8.500" /></svg>
          </button>
          <button type="button" aria-label="Close"><X className="size-[14px]" strokeWidth={2} /></button>
        </div>
      </div>
      <nav className="flex h-[25px] items-center border-t border-b border-t-[#f4f4f4] border-b-[#b0b0b0] text-[12px]">
        <div className="mr-[5px] ml-1 self-stretch border-l-2 border-dotted border-[#b8b8b8]" />
        {MENU.map((item) => {
          const [before, rest] = item.split('&');
          return (
            <button key={item} type="button" className="px-[7px]">
              {before}<u className="underline-offset-2">{rest[0]}</u>{rest.slice(1)}
            </button>
          );
        })}
        <div className="ml-auto flex gap-[2px] pr-[2px]">
          <button type="button" aria-label="Minimize document" className="flex h-[14px] w-[14px] items-end justify-center border border-[#e0e0e0] pb-[2px]"><span className="h-[2px] w-[6px] bg-[#708090]" /></button>
          <button type="button" aria-label="Restore document" className="flex h-[14px] w-[14px] items-center justify-center border border-[#e0e0e0]">
            <svg viewBox="0 0 10 10" className="size-[10px]" fill="none" stroke="#708090" shapeRendering="crispEdges"><path d="M1.500 4.500H6.500V8.500H1.500ZM3.500 4.500V1.500H8.500V5.500H6.500" /></svg>
          </button>
          <button type="button" aria-label="Close document" className="flex h-[14px] w-[14px] items-center justify-center border border-[#e0e0e0]"><X className="size-[10px] text-[#708090]" strokeWidth={4} /></button>
        </div>
      </nav>

      <div className="flex h-[29px] border-b border-[#b0b0b0]">
        <Section className="pr-px">
          <Tools items="new open save | print preview | cut~ copy~ paste brush | undo redo | zoomin zoomout zoomwin extent page~ zoompage~ | abc+ | dots+ | snapno+ mirror+ | views+ axes+ | props+ |" />
          <Combo label="Command" className="w-[301px]" />
          <Tools items="help+ book mail" />
        </Section>
        <Section><Tools items="seg seg2 seg3 par perp cross dbl fork circd circ2 circ3 hatchc | seg seg3 seg2" /></Section>
        <Section><Tools items="dim dimr dimr2 dimh dim1 dim2 dim3 dima dimR dimD lead lead2 Q mbox stamp" /></Section>
      </div>

      <div className="flex h-[29px] border-b border-[#b0b0b0]">
        <Section className="pr-0">
          <Tools items="gear~ layers" />
          <Combo label="Layer" className="w-[297px]" />
          <Combo label="Color" className="w-[100px]" />
          <Combo label="Line style" className="w-[100px]" />
          <Combo label="Line width" className="w-[100px]" dim />
          <Combo label="Brush" className="w-[118px]" />
          <Combo label="Brush color" className="w-[100px]" />
          <Tools items="|" />
          <Combo label="Material" className="w-[100px]" />
          <Combo label="Material style" className="w-[100px]" dim />
          <Tools items="pick cup*+" />
        </Section>
        <Section><Tools items="grp~ group~ tag | group~" /></Section>
        <Section><Tools items="arrow* editarrow | cup* cup cupb cupg | zoompage~ pick | camera | cut~ copy~ paste" /></Section>
        <Section><Tools items="vcube vleft vfront vbot vback vright iso1 iso2 iso3 iso4" /></Section>
      </div>

      <div className="flex h-[50px] border-b border-[#b0b0b0]">
        <Section className="pr-0">
          <div className="flex w-[23px] justify-center gap-px">
            <span className="h-1 w-2 bg-[#a8a848]" /><span className="mt-2 h-[2px] w-1 bg-[#a8a848]" />
          </div>
        </Section>
        <Section className="pr-px"><Tools items="box boxr ball ring cone wedge sheet screw sheet revolve cyl cyl torus grid slab section t3d t3dc t3dp" /></Section>
        <Section className="pr-px"><Tools items="sphereg union~ diff~ hatchg _ union diff inter" /></Section>
        <Section className="pr-px">
          <Tools items="squares~ four~ ringo~ squares~ four~ ringo~ flip~ scale~" />
          <button type="button" className="w-[80px] pl-[3px] text-left text-[#808080]"><u>C</u>opy In Place</button>
        </Section>
        <Section className="pr-0">
          <div className="flex h-full w-[154px] flex-col bg-[#f0f0f0]">
            <div className="mt-[3px] flex"><button type="button" className="h-[21px] w-[88px] border-x border-t border-[#dcdcdc] bg-white">Measurement</button></div>
            <div className="flex-1 bg-white"><Tools items="mcoord mlen mang marea mvol mbox3 mwall" /></div>
          </div>
        </Section>
        <Section className="pr-px"><Tools items="trim meet split arc3 xcut hatch4 clip para rcirc rarr ovl | fil cham cham2 cham3 bag | gcurve garc | gx ghash swap plusr" /></Section>
        <Section className="pr-px"><Tools items="marker marker2 marker3" /></Section>
        <Section><Tools items="al1 al2 al3 al4 al5 al6 al7 | ord ord ord ord" /></Section>
      </div>
    </header>
  );
}

function PanelTitle({ children }: { children: ReactNode }) {
  return (
    <div className="flex h-[22px] shrink-0 items-center border-x border-t-2 border-[#606060] bg-linear-to-b from-[#bccbdd] to-[#d5e2f0] pl-[4px]">
      <h2 className="flex-1">{children}</h2>
      <button type="button" aria-label="Pin" className="mr-1">
        <svg viewBox="0 0 16 16" className="size-4"><path d="M1 15L6 10" stroke="#888" strokeWidth="1.500" /><circle cx="7" cy="8" r="4.500" fill="#b8b8b8" stroke="#888" /><circle cx="10" cy="6" r="5" fill="#d8d8d8" stroke="#888" /><circle cx="9" cy="5" r="2" fill="#fff" /></svg>
      </button>
      <button type="button" aria-label="Close" className="mr-[2px] flex size-[14px] items-center justify-center rounded-xs bg-[#a4a4a4] outline outline-white/60"><X className="size-[10px] text-white" strokeWidth={4} /></button>
    </div>
  );
}

const LAYERS = [
  { name: '0', current: true, visible: true, selected: true, color: 'bg-black', dash: '' },
  { name: 'Defpoints', visible: true, color: 'bg-black', dash: '' },
  { name: 'Zeberka', visible: true, selected: true, color: 'bg-black', dash: '' },
  { name: 'AXIS', visible: true, color: 'bg-[#ff0000]', dash: '24 5 5 5' },
  { name: '$CONSTRUCTION', color: 'bg-[#c0d8d8]', dash: '19 5 2 4' },
  { name: 'Podwozie', color: 'bg-black', dash: '' },
  { name: 'Zeberka org.', visible: true, selected: true, color: 'bg-black', dash: '' },
  { name: 'Temp', color: 'bg-black', dash: '' },
  { name: 'Silnik', color: 'bg-black', dash: '' },
  { name: 'Półka', color: 'bg-black', dash: '' },
  { name: 'Boczek', visible: true, color: 'bg-[#0000ff]', dash: '' },
];

function LayerPanel() {
  return (
    <aside className="flex w-[300px] shrink-0 flex-col">
      <PanelTitle>Layer</PanelTitle>
      <div className="flex h-[35px] items-center pl-[5px]"><Tools items="refresh | filt filth screen | tmpl" /></div>
      <div className="flex h-[35px] items-center pb-1 pl-[3px]"><Tools className="gap-px" items="newl del ok | sel plist | eyes eyeh eye | locks lockh lock | lstar" /></div>
      <div className="mr-[3px] ml-1 h-[151px] border-t border-l border-[#a0a0a0] bg-white pl-2">
        <div className="flex h-[18px] items-center">
          <span className="flex size-[9px] items-center justify-center border border-[#909090] text-[9px] leading-none text-[#2040a0]">-</span>
          <span className="mr-[2px] w-1 border-t border-dotted border-[#808080]" />
          <Icon name="stackL" />
          <span className="bg-[#b0d6f4] px-[2px]">Layer (11)</span>
        </div>
        <div className="ml-[22px]">
          <div className="flex h-[18px] items-center border-l border-dotted border-[#808080]"><span className="mr-[2px] w-2 border-t border-dotted border-[#808080]" /><Icon name="tmpl" /><span className="ml-[3px]">LayersTemplates</span></div>
          <div className="flex h-[18px] items-center"><span className="mr-[2px] h-[9px] w-[9px] self-start border-b border-l border-dotted border-[#808080]" /><Icon name="gfilt" /><span className="ml-[3px]">LayersFilters</span></div>
        </div>
      </div>
      <div className="mt-[3px] mr-[3px] ml-1 min-h-0 flex-1 basis-0 overflow-hidden border-t border-l border-[#a0a0a0] bg-white">
        <table className="w-full table-fixed border-collapse">
          <colgroup><col className="w-[120px]" /><col className="w-[26px]" /><col className="w-[26px]" /><col className="w-[26px]" /><col className="w-[26px]" /><col /></colgroup>
          <thead>
            <tr className="h-[22px] border-b border-[#909090] bg-[#f0f0f0] text-left [&>th]:border-r [&>th]:border-[#909090] [&>th]:p-0 [&>th]:font-normal">
              <th><span className="pl-[6px]">Name</span></th>
              <th aria-label="Current"><Icon name="tick" className="mx-auto size-4" /></th>
              <th aria-label="Visible"><Icon name="eye" className="mx-auto size-4" /></th>
              <th aria-label="Locked"><Icon name="lock" className="mx-auto size-4" /></th>
              <th aria-label="Color"><Icon name="palette" className="mx-auto size-4" /></th>
              <th><div className="flex items-center gap-[2px] pl-1 whitespace-nowrap"><Icon name="dash" />Line St..</div></th>
            </tr>
          </thead>
          <tbody className="[&_td]:border [&_td]:border-l-0 [&_td]:border-[#f0f0f0] [&_td]:p-0">
            {LAYERS.map((layer) => (
              <tr key={layer.name} className="h-[19px]">
                <td className={layer.selected ? 'bg-[#c5ddf2]' : ''}>
                  <div className="flex h-[18px] items-center gap-[6px] whitespace-nowrap">
                    <span className="bg-white"><Icon name="stackL" /></span>{layer.name}
                  </div>
                </td>
                <td>{layer.current && <Icon name="tick" className="mx-auto size-4" />}</td>
                <td>{layer.visible && <Icon name="eye" className="mx-auto size-4" />}</td>
                <td />
                <td><div className={`mx-auto h-4 w-[21px] border border-[#909090] ${layer.color}`} /></td>
                <td><svg className="ml-[3px] block h-[2px] w-full" shapeRendering="crispEdges"><path d="M0 .5H80" stroke="#000" strokeDasharray={layer.dash} /></svg></td>
              </tr>
            ))}
            {Array.from({ length: 36 }, (_, i) => (
              <tr key={i} className="h-[19px]"><td /><td /><td /><td /><td /><td /></tr>
            ))}
          </tbody>
        </table>
      </div>
      <div className="mr-[3px] mb-[7px] ml-1 flex h-[17px] items-center border-l border-[#a0a0a0]">
        <ChevronLeft className="size-4 text-[#505050]" strokeWidth={3} />
        <div className="h-4 w-[92px] bg-[#cdcdcd]" />
        <ChevronRight className="ml-auto size-4 text-[#505050]" strokeWidth={3} />
      </div>
    </aside>
  );
}

const PX_PER_100MM = 251;

function TopRuler() {
  return (
    <svg className="block h-[14px] min-w-0 flex-1 border-b-2 border-[#808080] bg-[#f0f0f0] font-['Liberation_Sans']" shapeRendering="crispEdges">
      {Array.from({ length: 80 }, (_, i) => {
        const x = Math.round(222 + ((i - 8) * PX_PER_100MM) / 10);
        const major = i % 10 === 8;
        return <path key={i} d={`M${x + 0.5} ${major ? 0 : i % 10 === 3 ? 7 : 9}V12`} stroke="#000" />;
      })}
      {Array.from({ length: 7 }, (_, i) => (
        <text key={i} x={224 + i * PX_PER_100MM} y={8} fontSize={9} fill="#404040">{`${6200 + i * 100} mm`}</text>
      ))}
      <path d="M967.500 0V12" stroke="#f020f0" />
    </svg>
  );
}

function SideRuler() {
  return (
    <svg className="block w-4 shrink-0 border-r-2 border-[#808080] bg-[#f0f0f0] font-['Liberation_Sans']" shapeRendering="crispEdges">
      {Array.from({ length: 46 }, (_, i) => {
        const y = Math.round(219 + ((i - 8) * PX_PER_100MM) / 10);
        return <path key={i} d={`M${i % 10 === 8 ? 1 : i % 10 === 3 ? 9 : 11} ${y + 0.5}H14`} stroke="#000" />;
      })}
      {Array.from({ length: 4 }, (_, i) => (
        <text key={i} transform={`translate(9 ${217 + i * PX_PER_100MM}) rotate(-90)`} fontSize={9} fill="#404040">{`${2600 - i * 100} mm`}</text>
      ))}
      <path d="M0 565.500H14" stroke="#f020f0" />
    </svg>
  );
}

// wing rib: leading edge y, spar notch x and lightening hole x
const RIBS = [
  { y: 194, notch: 219, hole: 1279 },
  { y: 297, notch: 222, hole: 1281 },
  { y: 399, notch: 225, hole: 1284 },
  { y: 502, notch: 228, hole: 1287 },
  { y: 604, notch: 231, hole: 1290 },
  { y: 707, notch: 234, hole: 1293 },
  { y: 807, notch: 237, hole: 1296 },
  { y: 908, notch: 240, hole: 1299 },
  { y: 1008, notch: 243, hole: 1302 },
];

// smooth curve through "x,y" points (Catmull-Rom as cubic segments)
function spline(points: string, start = 'M') {
  const p = points.split(' ').map((s) => s.split(',').map(Number));
  let d = `${start}${p[0][0]} ${p[0][1]}`;
  for (let i = 0; i < p.length - 1; i++) {
    const a = p[i - 1] ?? p[i];
    const b = p[i];
    const c = p[i + 1];
    const e = p[i + 2] ?? c;
    const len = c[0] - b[0];
    const t1 = c[0] - a[0] ? (len / (c[0] - a[0])) / 3 : 1 / 6;
    const t2 = e[0] - b[0] ? (len / (e[0] - b[0])) / 3 : 1 / 6;
    d += `C${b[0] + (c[0] - a[0]) * t1} ${b[1] + (c[1] - a[1]) * t1} ${c[0] - (e[0] - b[0]) * t2} ${c[1] - (e[1] - b[1]) * t2} ${c[0]} ${c[1]}`;
  }
  return d;
}

const OUTER =
  spline('2,-6 7,-12 15,-19 27,-26 47,-34 70,-40 93,-46 123,-51 157,-55 190,-57 233,-59 278,-59 323,-57 370,-53 413,-50 453,-46 497,-42 577,-32 651,-20 753,0') +
  spline('2,5 8,11 17,17 32,22 48,26 73,30 103,32 127,33 207,33 257,31 303,29 377,25 453,21 577,13 753,1') +
  'M2 -6C1 -4 0 -2 0 0C0 2 1 4 2 5';

function Rib({ y, notch, hole }: { y: number; notch: number; hole: number }) {
  const inner =
    `M15 13V3H23V-5H15V-15` +
    spline(`15,-15 27,-22 47,-30 70,-36 93,-42 123,-47 157,-51 190,-54 ${notch},-55`, 'L') +
    `V-47H${notch + 25}V-55` +
    spline(`${notch + 25},-55 278,-55 323,-53 370,-49 413,-46 453,-42 497,-38 577,-28 651,-16 732,-1`, 'L') +
    spline(`15,13 32,18 48,22 73,26 103,28 130,29 200,29 ${notch},28`) +
    `V20H${notch + 25}V27` +
    spline(`${notch + 25},27 303,26 377,22 453,17 577,9 732,-1`, 'L');
  return (
    <g>
      <path d={OUTER + inner} transform={`translate(1023.500 ${y + 0.5})`} />
      <rect x={hole + 0.5} y={y - 30.5} width={70} height={35} rx={6} />
    </g>
  );
}

function Drawing() {
  return (
    <svg className="block h-full w-full" fill="none" shapeRendering="crispEdges" role="img" aria-label="Wing rib drawing">
      <g transform="translate(-348 -173)">
        <g stroke="#000">
          <path d="M1023.500 170V1008M1600.500 170V1008M1776.500 170V1008M1023 1008.500H1777M1278.500 949V1008" />
          <path d="M405.500 689L422 1000M422.500 707V1009M347 1221.500L391.500 1222L394.500 1311" />
          <circle cx="1498" cy="998" r="4" />
        </g>
        <g stroke="#ff0000">
          {RIBS.map((rib) => <Rib key={rib.y} {...rib} />)}
          <path d="M1023 1008.500H1039M422.500 707V724M422.500 807V819M422.500 906V914" />
        </g>
        <g stroke="#ff8000">
          {[709, 804, 900, 995].map((cy) => <circle key={cy} cx="1275" cy={cy} r="7.500" />)}
          {[723, 818, 914, 1009].map((cy) => <circle key={cy} cx="423" cy={cy} r="7.500" />)}
        </g>
      </g>
    </svg>
  );
}

function Sheet() {
  const [tab, setTab] = useState('Model');
  return (
    <main className="mt-[2px] mr-1 ml-[5px] flex min-w-0 flex-1 flex-col border-t border-l border-[#a0a0a0]">
      <div className="flex min-h-0 flex-1">
        <div className="flex min-w-0 flex-1 flex-col">
          <div className="flex">
            <div className="flex h-[14px] w-4 items-center justify-center bg-[#b4b4a4] text-[9px] font-bold">↑.</div>
            <TopRuler />
          </div>
          <div className="flex min-h-0 flex-1">
            <SideRuler />
            <div className="min-h-0 min-w-0 flex-1 basis-0 overflow-hidden border-r border-b border-[#e0e0e0] bg-white"><Drawing /></div>
          </div>
        </div>
        <div className="ml-[2px] flex w-4 flex-col items-center pt-3">
          <ChevronUp className="size-4 text-[#505050]" strokeWidth={3} />
          <div className="mt-[193px] h-[61px] w-[15px] bg-[#cdcdcd]" />
          <ChevronDown className="mt-auto size-4 text-[#505050]" strokeWidth={3} />
        </div>
      </div>
      <div className="flex h-[23px] items-start border-t border-white">
        <div className="ml-[25px] flex gap-[2px] border-t border-[#606060]">
          {['Model', 'Układ1', 'Układ2'].map((name, i) => (
            <button
              key={name}
              type="button"
              onClick={() => setTab(name)}
              className={`flex h-[19px] w-[65px] items-center gap-px rounded-b-sm pl-1 ${tab === name ? 'border-r border-b border-black text-black' : 'border-r border-b border-[#b0b0b0] bg-[#e0e0e0] text-[#707070]'}`}
            >
              {i === 0 ? <Icon name="model" className="size-4" /> : <Icon name="new" className="size-4" />}
              {name}
            </button>
          ))}
          <div className="w-[23px]" />
        </div>
        <div className="flex flex-1 items-center self-stretch border-l border-[#a0a0a0] pr-[17px] pl-[5px]">
          <ChevronLeft className="size-4 text-[#505050]" strokeWidth={3} />
          <div className="flex-[1336]" />
          <div className="h-[15px] w-[65px] bg-[#cdcdcd]" />
          <div className="flex-[230]" />
          <ChevronRight className="size-4 text-[#505050]" strokeWidth={3} />
        </div>
      </div>
    </main>
  );
}

const GROUPS = [
  { title: 'Snap Modes', items: 'snapno s2* s3* s4 s5 s6 s7 s8* s9 s10 s11 s12 s13 s14 s15 s16 s17* s18* s19* mirror' },
  { title: 'Line', items: 'ln poly ngon tri rect rrect pln parl tanc arcl arcr twoarc star tree' },
  { title: 'Circle/Ellipse', items: 'circc concent circ2 tang circt circ3 circx circy ell ellr ellab' },
  { title: 'Arc', items: '' },
  { title: 'Curve', items: 'bez spl arch spiral spiral cloud zig' },
  { title: 'Double Line', items: 'dl1 dl2 concent dl4 dl5 dl6 dl7 dl8' },
  { title: 'Multiline', items: '' },
  { title: 'Dimension', items: 'dim dimr dimr2 dimh dim1 dim2 dim3 dima dimR dimD lead lead2 Q mbox stamp' },
];

function ToolsPanel() {
  return (
    <aside className="flex w-[263px] shrink-0 flex-col">
      <PanelTitle>Tools</PanelTitle>
      <div className="mt-[3px] flex h-[29px] shrink-0 items-center border-r border-b border-[#a0a0a0] bg-white pl-[2px]">
        <Tools items="arrow* editarrow globe |" />
        <div className="relative h-6 w-[100px] border border-[#a0a0a0]">
          <select aria-label="Tool set" className="block h-full w-full appearance-none bg-white pl-[2px]"><option>Sketch</option></select>
          <div className="pointer-events-none absolute inset-y-0 right-0 flex w-[17px] items-center justify-center border-l border-[#a0a0a0] bg-[#e0e0e0]"><ChevronDown className="size-3" /></div>
        </div>
        <Tools items="knife+" />
      </div>
      <div className="mt-[1px] flex h-[749px] shrink-0 flex-col gap-[3px] bg-linear-to-b from-[#dae4ef] to-[#b2c6dc] p-[2px] pt-[3px]">
        {GROUPS.map((group) => (
          <section key={group.title}>
            <div className="flex h-[25px] items-center rounded-t-sm bg-linear-to-r from-white to-[#e5eaf2] pr-1 pl-[13px]">
              <h3 className="flex-1 text-[12px] font-semibold text-[#0b5ca8]">{group.title}</h3>
              <button type="button" aria-label={`Toggle ${group.title}`} className="mb-[3px] flex size-4 items-center justify-center rounded-full bg-white shadow-[0_0_1px_1px_#c4d0e0]">
                {group.items ? <ChevronsUp className="size-3 text-[#00489c]" strokeWidth={3} /> : <ChevronsDown className="size-3 text-[#00489c]" strokeWidth={3} />}
              </button>
            </div>
            {group.items && (
              <div className="flex flex-wrap border border-t-0 border-white bg-[#f3f5fa] pt-[7px] pr-[22px] pb-[8px] pl-[10px]">
                {group.items.split(' ').map((raw, i) => {
                  const name = raw.replace('*', '');
                  return (
                    <button key={i} type="button" aria-label={name} className={`flex size-7 items-center justify-center ${raw.includes('*') ? 'border border-[#000080] bg-[#ffc070]' : ''}`}>
                      <Icon name={name} />
                    </button>
                  );
                })}
              </div>
            )}
          </section>
        ))}
      </div>
      <div className="mt-[3px] flex h-[24px] shrink-0 items-center">
        {[['Tools', 'knife'], ['Selecti...', 'cursor'], ['Blocks', 'block'], ['Library', 'books']].map(([name, icon], i) => (
          <button key={name} type="button" className={`flex items-center gap-1 border-r border-b border-[#d4d4d4] px-[5px] ${i === 0 ? 'h-6 bg-white' : 'h-5'}`}>
            <Icon name={icon} />{name}
          </button>
        ))}
      </div>
      <div className="mt-[4px]"><PanelTitle>Measurement Info</PanelTitle></div>
      <div className="flex h-[32px] shrink-0 items-center gap-[2px] pt-1 pl-[5px]">
        <button type="button" aria-label="Show list" className="flex size-[22px] items-center justify-center border-t border-l border-[#a0a0a0] bg-[#f8f8f8]"><Icon name="list" /></button>
        <button type="button" aria-label="Clear" className="flex size-[22px] items-center justify-center"><Icon name="del" className="size-3" /></button>
      </div>
      <div className="mr-[5px] mb-[26px] ml-1 flex min-h-0 flex-1 basis-0 border border-[#a0a0a8] bg-white">
        <textarea aria-label="Measurements" className="block min-h-0 min-w-0 flex-1 resize-none" />
        <div className="flex w-[17px] flex-col items-center justify-between border-r-2 border-white bg-[#f0f0f0] py-[3px]">
          <ChevronUp className="size-3 text-[#c0c0c0]" strokeWidth={4} />
          <ChevronDown className="size-3 text-[#c0c0c0]" strokeWidth={4} />
        </div>
      </div>
    </aside>
  );
}

const FIELDS: [string, string, string, boolean][] = [
  ['Scale X', '1', 'w-[55px]', true], ['Scale Y', '1', 'w-[55px]', true], ['Size X', '0 mm', 'w-[52px]', false], ['Size Y', '0 mm', 'w-[55px]', false],
  ['Pos X', '0 mm', 'w-[55px]', false], ['Pos Y', '0 mm', 'w-[55px]', false], ['Delta X', '0 mm', 'w-[56px]', false], ['Delta Y', '0 mm', 'w-[55px]', false],
  ['Rot', '0', 'w-[55px]', true], ['Delta Dist', '0 mm', 'w-[55px]', false], ['Delta Ang', '0', 'w-[53px]', true],
];

function Footer() {
  return (
    <footer>
      <div className="flex h-[42px] items-center border-t border-r border-b border-t-white border-[#b0b0b0]">
        <div className="mr-1 ml-1 self-stretch border-l-2 border-dotted border-[#b8b8b8]" />
        <Tools items="del~ sheet2~ |" />
        {FIELDS.map(([label, value, width, spin]) => (
          <label key={label} className={`flex h-[36px] flex-col pl-[2px] ${width}`}>
            <span className="h-[17px] whitespace-nowrap">{label}</span>
            <span className="flex h-[18px] gap-[2px] pr-[3px]">
              <input defaultValue={value} className="min-w-0 flex-1 border-t border-l border-[#808080] pl-1 text-[#808080]" />
              {spin && (
                <span className="flex w-[13px] flex-col items-center justify-between border border-[#d8d8d8] text-[5px] leading-[7px] text-[#606060]"><span>▲</span><span>▼</span></span>
              )}
            </span>
          </label>
        ))}
        <Tools items="| pen sw* node | boxsel* wp cp fp | back r1 r2 padlk nob nob2 nob3 nob3 nob" />
      </div>
      <div className="flex h-[25px] items-center">
        <p className="flex-1 pl-2 text-[12px]">Select object(s)</p>
        <span className="pr-[3px]">SNAP</span>
        <span className="h-6 border-l border-[#d0d0d0] px-[5px] pt-1">GEO</span>
        <span className="mr-[16px] h-6 border-l border-[#d0d0d0]" />
        {[['X', '6496,7348 m'], ['Y', '2462,2737 m'], ['Z', '0 mm']].map(([axis, value]) => (
          <div key={axis} className="mr-[12px] flex items-center gap-[2px]">
            <label className="flex w-[9px] flex-col items-center text-[9px] leading-[9px]">
              <input type="checkbox" className="size-2 appearance-none border-2 border-[#606060] bg-white" />{axis}
            </label>
            <input aria-label={`${axis} coordinate`} defaultValue={value} className={`h-[19px] w-[73px] border border-black bg-white pl-[3px] ${axis === 'Z' ? 'text-[#808080]' : ''}`} />
          </div>
        ))}
        <span className="-ml-[6px] h-6 w-[56px] border-l border-[#d0d0d0] pt-[1px] pl-[3px]">66%</span>
        <span className="h-6 w-[61px] border-l border-[#d0d0d0] pt-[1px] pl-[3px]">17:18</span>
      </div>
    </footer>
  );
}

export default function App() {
  return (
    <div className="flex h-screen min-h-[900px] flex-col overflow-hidden bg-[#f0f0f0] font-['Open_Sans','Noto_Sans',sans-serif] text-[11px] leading-4 text-black">
      <Header />
      <div className="flex min-h-0 flex-1">
        <div className="w-[26px] shrink-0">
          <div className="mt-1 border-t-2 border-r border-b border-dotted border-[#b0b0b0] pt-[4px] pb-[2px] [border-bottom-style:solid] [border-right-style:solid]">
            <Tools vertical items="arrow*+ editarrow seg+ ln+ circc+ bez+ point+ letter+ fillsq+ | t3d+ ball+ sheet+ | dim+ | wall+ blob+ | block+ grp~+ pic+ | sparkle+" />
          </div>
        </div>
        <LayerPanel />
        <Sheet />
        <ToolsPanel />
        <div className="w-[26px] shrink-0">
          <div className="mt-1 border-t-2 border-r border-b border-dotted border-[#b0b0b0] pt-[4px] pb-[2px] [border-bottom-style:solid] [border-right-style:solid]">
            <Tools vertical items="flip~+ | split+ rdiag+ | swap+ bag+ | ord+ | sheet2~+ section+ sphereg+ marker+ chain+ | greenx+ node+ | group~" />
          </div>
        </div>
      </div>
      <Footer />
    </div>
  );
}
